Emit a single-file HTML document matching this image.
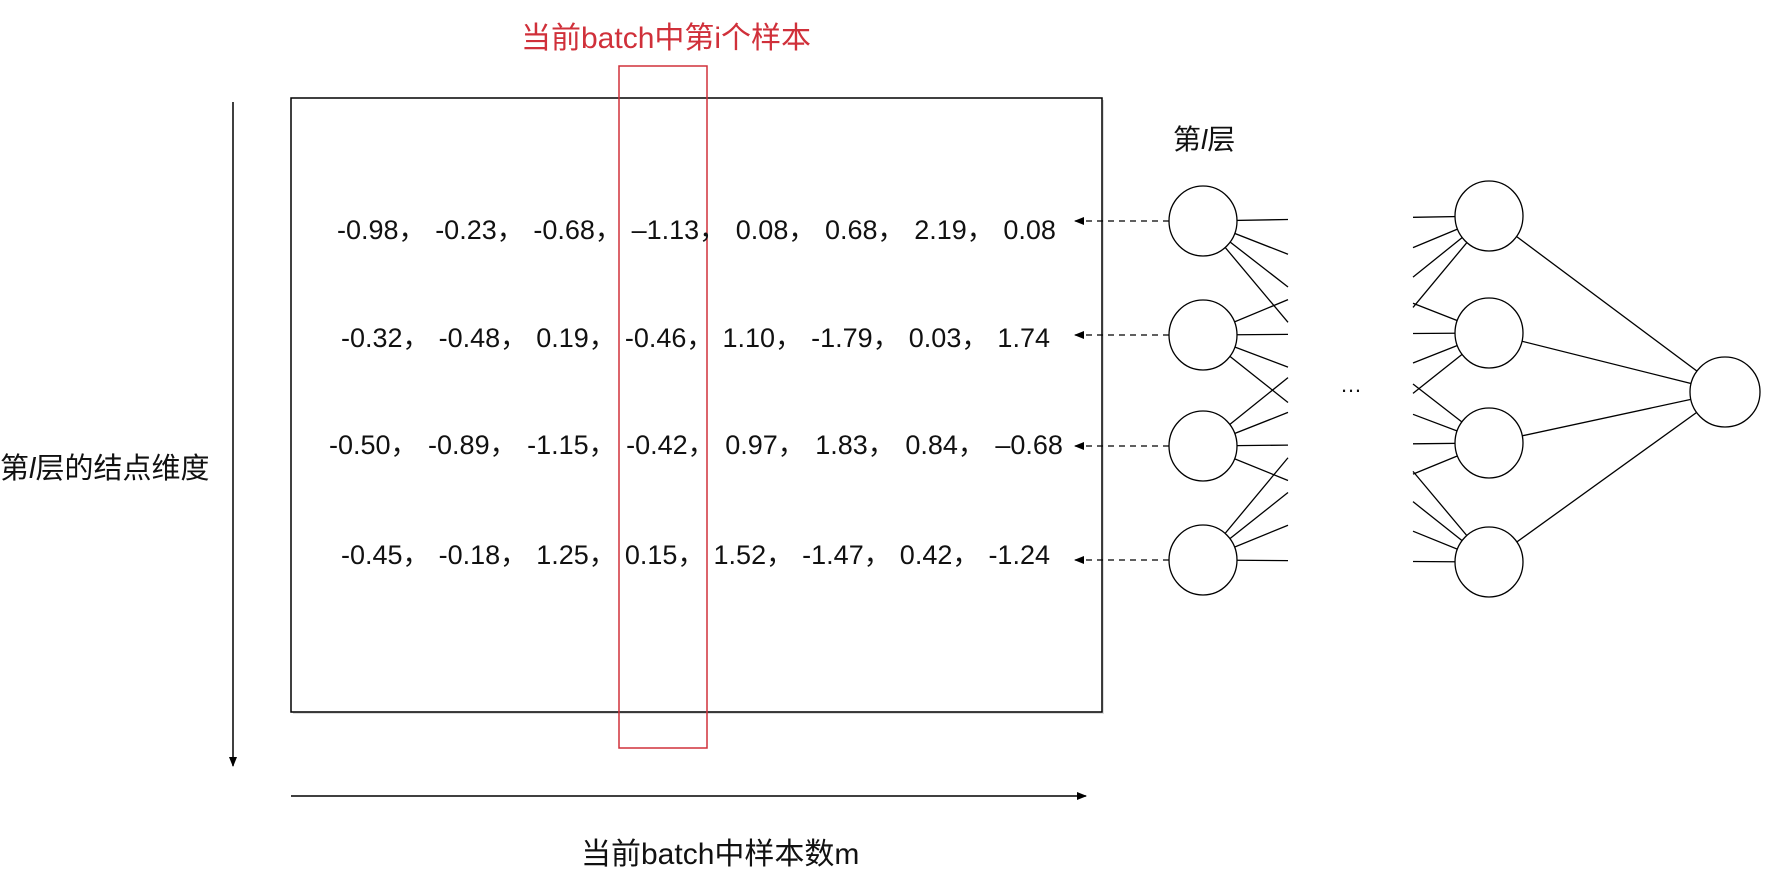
<!DOCTYPE html>
<html><head><meta charset="utf-8"><style>
body{margin:0;width:1779px;height:862px;background:#fff;overflow:hidden;position:relative;font-family:"Liberation Sans","Noto Sans CJK SC",sans-serif;}
.t{position:absolute;white-space:nowrap;color:#111;}
.r{position:absolute;display:flex;justify-content:space-between;align-items:baseline;font-size:27px;line-height:32px;color:#111;white-space:nowrap;}
</style></head><body>
<svg width="1779" height="862" style="position:absolute;left:0;top:0">
<defs><marker id="ah" markerWidth="10" markerHeight="8" refX="9" refY="4" orient="auto" markerUnits="userSpaceOnUse"><path d="M0,0 L10,4 L0,8 z" fill="#000"/></marker></defs>
<rect x="293" y="100" width="811" height="614" fill="#bbb" opacity="0.5"/>
<rect x="291" y="98" width="811" height="614" fill="#fff" stroke="#000" stroke-width="1.5"/>
<line x1="233" y1="102" x2="233" y2="766" stroke="#000" stroke-width="1.5" marker-end="url(#ah)"/>
<line x1="291" y1="796" x2="1086" y2="796" stroke="#000" stroke-width="1.5" marker-end="url(#ah)"/>
<g id="net" stroke="#000" stroke-width="1.3" fill="#fff"></g>
<rect x="619" y="66" width="88" height="682" fill="none" stroke="#d0303a" stroke-width="1.5"/>
</svg>
<div class="t" style="left:521px;top:13px;font-size:30px;color:#d0303a">当前batch中第i个样本</div>
<div class="t" style="left:1173px;top:118px;font-size:28px">第<i>l</i>层</div>
<div class="t" style="left:0;top:445px;font-size:29px">第<i>l</i>层的结点维度</div>
<div class="t" style="left:581px;top:829px;font-size:30px">当前batch中样本数m</div>
<div class="t" style="left:1340px;top:372px;font-size:22px">…</div>
<div class="r" style="left:337px;top:214px;width:719px"><span>-0.98，</span><span>-0.23，</span><span>-0.68，</span><span>–1.13，</span><span>0.08，</span><span>0.68，</span><span>2.19，</span><span>0.08</span></div>
<div class="r" style="left:341px;top:322px;width:709px"><span>-0.32，</span><span>-0.48，</span><span>0.19，</span><span>-0.46，</span><span>1.10，</span><span>-1.79，</span><span>0.03，</span><span>1.74</span></div>
<div class="r" style="left:329px;top:429px;width:734px"><span>-0.50，</span><span>-0.89，</span><span>-1.15，</span><span>-0.42，</span><span>0.97，</span><span>1.83，</span><span>0.84，</span><span>–0.68</span></div>
<div class="r" style="left:341px;top:539px;width:709px"><span>-0.45，</span><span>-0.18，</span><span>1.25，</span><span>0.15，</span><span>1.52，</span><span>-1.47，</span><span>0.42，</span><span>-1.24</span></div>
<script>
var g=document.getElementById('net'),h='';
var L=[221,335,446,560],R=[216,333,443,562],lx=1203,rx=1489;
for(var i=0;i<4;i++){for(var j=0;j<4;j++){
 var y=L[i]+(R[j]-L[i])*(1288-lx)/(rx-lx);h+='<line x1="'+lx+'" y1="'+L[i]+'" x2="1288" y2="'+y+'"/>';
 var y2=R[j]+(L[i]-R[j])*(rx-1413)/(rx-lx);h+='<line x1="'+rx+'" y1="'+R[j]+'" x2="1413" y2="'+y2+'"/>';}
 h+='<line x1="'+rx+'" y1="'+R[i]+'" x2="1725" y2="392"/>';
 h+='<line x1="1169" y1="'+L[i]+'" x2="1075" y2="'+L[i]+'" stroke-dasharray="6,5" marker-end="url(#ah)"/>';}
for(i=0;i<4;i++){h+='<ellipse cx="'+lx+'" cy="'+L[i]+'" rx="34" ry="35"/><ellipse cx="'+rx+'" cy="'+R[i]+'" rx="34" ry="35"/>';}
h+='<ellipse cx="1725" cy="392" rx="35" ry="35"/>';
g.innerHTML=h;
</script>
</body></html>
